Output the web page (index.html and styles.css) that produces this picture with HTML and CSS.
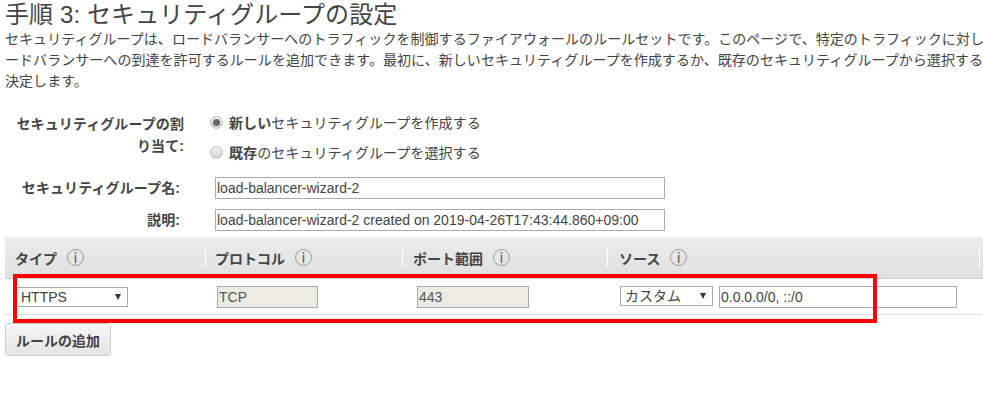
FILE: index.html
```html
<!DOCTYPE html>
<html lang="ja">
<head>
<meta charset="utf-8">
<title>手順 3</title>
<link rel="stylesheet" href="styles.css">
</head>
<body>
<div class="page">
  <h1 class="title">手順 3: セキュリティグループの設定</h1>
  <p class="intro">セキュリティグループは、ロードバランサーへのトラフィックを制御するファイアウォールのルールセットです。このページで、特定のトラフィックに対し<br>ードバランサーへの到達を許可するルールを追加できます。最初に、新しいセキュリティグループを作成するか、既存のセキュリティグループから選択する<br>決定します。</p>
  <div class="form">
    <div class="row row-assign">
      <div class="label label-assign">セキュリティグループの割り当て:</div>
      <div class="radios">
        <label class="radio-line"><input type="radio" name="sg" class="radio" checked><span><b>新しい</b>セキュリティグループを作成する</span></label>
        <label class="radio-line"><input type="radio" name="sg" class="radio"><span><b>既存</b>のセキュリティグループを選択する</span></label>
      </div>
    </div>
    <div class="row row-name">
      <div class="label">セキュリティグループ名:</div>
      <input class="text wide" value="load-balancer-wizard-2">
    </div>
    <div class="row row-desc">
      <div class="label">説明:</div>
      <input class="text wide" value="load-balancer-wizard-2 created on 2019-04-26T17:43:44.860+09:00">
    </div>
  </div>
  <div class="table">
    <div class="thead">
      <div class="th c1">タイプ <span class="info">i</span></div>
      <div class="th c2">プロトコル <span class="info">i</span></div>
      <div class="th c3">ポート範囲 <span class="info">i</span></div>
      <div class="th c4">ソース <span class="info">i</span></div>
    </div>
    <div class="tbody">
      <div class="td c1"><div class="sel sel-type">HTTPS</div></div>
      <div class="td c2"><input class="text ro" value="TCP" readonly></div>
      <div class="td c3"><input class="text ro" value="443" readonly></div>
      <div class="td c4"><div class="sel sel-src">カスタム</div><input class="text cidr" value="0.0.0.0/0, ::/0"></div>
    </div>
    <div class="highlight"></div>
  </div>
  <button class="add" type="button">ルールの追加</button>
</div>
</body>
</html>
```
FILE: styles.css
```css
* { box-sizing: border-box; }
html, body { margin: 0; padding: 0; background: #fff; }
body {
  width: 983px;
  height: 403px;
  overflow: hidden;
  font-family: "Liberation Sans", "Noto Sans CJK JP", sans-serif;
  font-size: 14px;
  color: #444;
}
.page { padding: 0 0 0 5px; }
.title {
  margin: 0;
  font-size: 24px;
  font-weight: 400;
  line-height: 29px;
  letter-spacing: 0.1px;
  color: #444;
}
.intro {
  margin: 0;
  line-height: 21px;
  letter-spacing: 0.05px;
  white-space: nowrap;
  color: #444;
}
.form { margin-top: 21px; }
.row { display: grid; grid-template-columns: 175px 1fr; column-gap: 35px; align-items: center; }
.row-assign { align-items: start; }
.row-name { margin-top: 13px; }
.row-desc { margin-top: 10px; }
.label { font-weight: 700; text-align: right; color: #444; line-height: 22px; letter-spacing: 0.1px; }
.label-assign { padding-left: 8px; margin-right: -4px; }
.radios { display: flex; flex-direction: column; gap: 9px; margin-left: -5px; letter-spacing: 0.08px; }
.radio-line { display: flex; align-items: center; gap: 6px; line-height: 21px; }
.radio {
  appearance: none;
  margin: 0 0 3px;
  width: 13px;
  height: 13px;
  border: 1px solid #bbb;
  border-radius: 50%;
  background: linear-gradient(#f0f0f0, #d4d4d4);
  display: grid;
  place-items: center;
}
.radio:checked::after {
  content: "";
  width: 7px;
  height: 7px;
  border-radius: 50%;
  background: #666;
}
.text {
  height: 22px;
  border: 1px solid #aaa;
  padding: 0 1px;
  font: 14px "Liberation Sans", "Noto Sans CJK JP", sans-serif;
  color: #444;
  background: #fff;
  border-radius: 0;
  outline: none;
}
.wide { width: 450px; }
.table { position: relative; margin-top: 6px; width: 978px; }
.thead {
  display: flex;
  height: 42px;
  align-items: center;
  background: linear-gradient(#ececec, #e0e0e0);
  border-bottom: 1px solid #d0d0d0;
}
.th {
  height: 19px;
  display: flex;
  align-items: center;
  gap: 10px;
  font-weight: 700;
  color: #444;
  padding-left: 10px;
  border-right: 1px solid #fff;
}
.th.c2 { padding-left: 9px; }
.th.c4 { padding-left: 11px; }
.c1 { width: 201px; flex: none; }
.c2 { width: 197px; flex: none; }
.c3 { width: 205px; flex: none; }
.c4 { width: 372px; flex: none; }
.info {
  width: 17px;
  height: 17px;
  border: 1px solid #999;
  border-radius: 50%;
  display: inline-flex;
  align-items: center;
  justify-content: center;
  font-size: 14px;
  font-weight: 400;
  font-family: "DejaVu Sans", sans-serif;
  color: #555;
}
.tbody {
  display: flex;
  height: 36px;
  align-items: center;
  border-bottom: 1px solid #e0e0e0;
}
.td { display: flex; align-items: center; }
.td.c1 { padding-left: 10px; }
.td.c2 { padding-left: 11px; }
.td.c3 { padding-left: 14px; }
.td.c4 { padding-left: 12px; gap: 6px; }
.sel {
  position: relative;
  height: 20px;
  border: 1px solid #aaa;
  background: #fff;
  padding-left: 5px;
  line-height: 18px;
  color: #444;
}
.sel::after {
  content: "";
  position: absolute;
  right: 6px;
  top: 6px;
  border-style: solid;
  border-width: 6px 3px 0;
  border-color: #333 transparent transparent;
}
.sel-type { width: 113px; }
.sel-src { width: 93px; margin-top: -2px; padding-left: 4px; }
.ro { width: 101px; background: #ebebe4; color: #555; }
.td.c3 .ro { width: 112px; }
.cidr { width: 238px; }
.highlight {
  position: absolute;
  left: 8px;
  top: 37px;
  width: 864px;
  height: 49px;
  border: 4px solid #f00;
}
.add {
  display: block;
  margin-top: 8px;
  width: 106px;
  height: 33px;
  padding: 0;
  border: 1px solid #ccc;
  border-radius: 3px;
  background: linear-gradient(#f6f6f6, #e4e4e4);
  font: 700 14px "Liberation Sans", "Noto Sans CJK JP", sans-serif;
  color: #444;
}
```
